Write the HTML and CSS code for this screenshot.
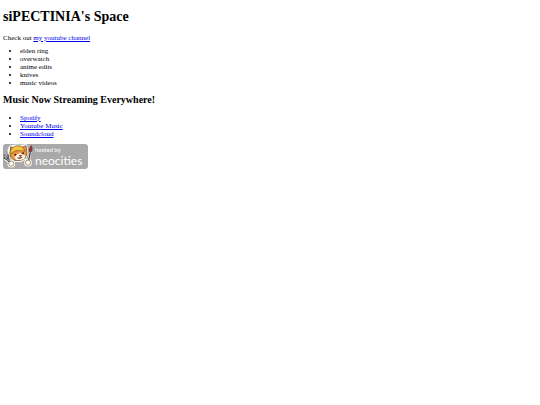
FILE: index.html
```html
<!DOCTYPE html>
<html lang="en">
<head>
  <meta charset="UTF-8">
  <meta name="viewport" content="width=device-width, initial-scale=1.0">
  <title>siPECTINIA's Space</title>
  <link rel="stylesheet" href="styles.css">
</head>
<body>
  <h1>siPECTINIA's Space</h1>

  <p>Check out <a href="#youtube">my youtube channel</a></p>

  <ul class="likes">
    <li>elden ring</li>
    <li>overwatch</li>
    <li>anime edits</li>
    <li>knives</li>
    <li>music videos</li>
  </ul>

  <h2>Music Now Streaming Everywhere!</h2>

  <ul class="music">
    <li><a href="#spotify">Spotify</a></li>
    <li><a href="#youtube-music">Youtube Music</a></li>
    <li><a href="#soundcloud">Soundcloud</a></li>
  </ul>

  <a class="badge" href="#neocities">
    <!-- cat with a wrench and a paintbrush -->
    <svg class="cat" viewBox="0 0 90 75" aria-hidden="true">
      <g stroke="#fff" stroke-width="7" stroke-linejoin="round" fill="#fff">
        <path d="M22 8 38 5l16 1 15-2 3 22-5 16-14 9-18-1-14-12-4-20z"/>
        <path d="M3 33l4 13 16 10M76 53l6-30V8"/>
        <circle cx="25" cy="59" r="8"/>
        <circle cx="75" cy="56" r="8"/>
      </g>
      <path d="M21 28 23 8l12 5 20-2 14-6 3 24-5 13-15 8-18-1-13-11z" fill="#ec9642" stroke="#5b3519" stroke-width="2"/>
      <path d="M34 39q10-10 17-12 8 3 17 9l-4 8-12 5-12-1z" fill="#fff4e4"/>
      <path d="M21 25q4-19 24-20 17 0 21 17l-13-3-16 2-15 9z" fill="#edb52d" stroke="#80591b" stroke-width="2"/>
      <path d="M30 14l12-5 15 4M27 21l14-6 19 3" fill="none" stroke="#ffe16c" stroke-width="2"/>
      <circle cx="37" cy="32" r="3" fill="#35241b"/>
      <circle cx="60" cy="28" r="3" fill="#35241b"/>
      <path d="M49 35l7-1-3 4zM43 41q8 6 15-2" fill="#88452e" stroke="#5e321d" stroke-width="2"/>
      <path d="M4 32l1 10 8 4 9 10M14 32l1 9-7 4" fill="none" stroke="#4c4c4c" stroke-width="6"/>
      <path d="M5 33l1 8 7 4 9 10M14 34v6" fill="none" stroke="#c9c9c9" stroke-width="2"/>
      <path d="M76 53 82 24" stroke="#554035" stroke-width="4"/>
      <path d="M79 23q-3-12 6-18 5 9 0 18z" fill="#a33128" stroke="#552a22" stroke-width="2"/>
      <circle cx="25" cy="59" r="8" fill="#fff6e6" stroke="#7e644d" stroke-width="2"/>
      <circle cx="75" cy="56" r="8" fill="#fff6e6" stroke="#7e644d" stroke-width="2"/>
    </svg>
    <span class="badge-text">
      <span class="hosted">hosted by</span>
      <span class="name">neocities</span>
    </span>
  </a>
</body>
</html>
```

FILE: styles.css
```css
body {
  margin: 9px 3px;
  background-color: #fff;
  color: #000;
  font-family: "Liberation Serif", "Times New Roman", serif;
  font-size: 7px;
  line-height: 8px;
}

h1 {
  margin: 0 0 9px;
  font-size: 14px;
  line-height: 16px;
}

h2 {
  margin: 0 0 8px;
  font-size: 10px;
  line-height: 12px;
}

p {
  margin: 0 0 5px;
}

ul {
  margin: 0 0 7px;
  padding-left: 17px;
}

.music {
  margin-bottom: 6px;
}

a {
  color: #0000ee;
}

/* neocities badge */
.badge {
  display: inline-flex;
  align-items: center;
  gap: 2px;
  padding-right: 6px;
  border-radius: 3px;
  background-color: #a9a9a9;
  color: #fff;
  font-family: Lato, "Open Sans", sans-serif;
  text-decoration: none;
}

.cat {
  width: 30px;
  height: 25px;
}

.badge-text {
  display: flex;
  flex-direction: column;
}

.hosted {
  font-size: 6px;
  line-height: 8px;
}

.name {
  font-size: 12px;
  line-height: 14px;
}
```
